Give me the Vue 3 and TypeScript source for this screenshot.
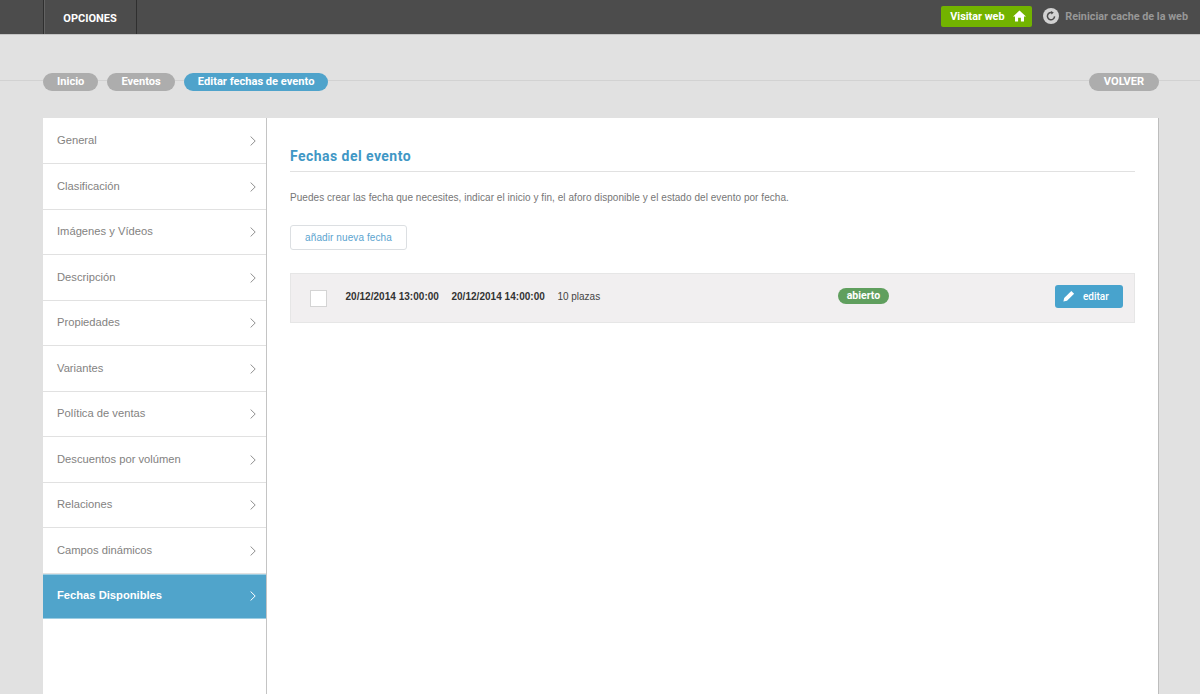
<template>
  <div class="page">
    <header class="topbar">
      <nav class="top-nav">
        <span class="top-tab">OPCIONES</span>
      </nav>
      <div class="top-actions">
        <a class="visit-btn">
          Visitar web
          <svg class="home-icon" width="13" height="12" viewBox="0 0 13 12">
            <path d="M6.5 0.5 L13 6.6 H11 V11.5 H7.9 V7.8 H5.1 V11.5 H2 V6.6 H0 Z" fill="#fff" />
          </svg>
        </a>
        <a class="cache-link">
          <svg class="cache-icon" width="16" height="16" viewBox="0 0 16 16">
            <circle cx="8" cy="8" r="8" fill="#d2d2d2" />
            <path d="M9.6 4.9 A3.6 3.6 0 1 0 11.6 8.4" fill="none" stroke="#4c4c4c" stroke-width="1.5" />
            <path d="M7.9 3 L10.8 4.6 L8.4 6.6 Z" fill="#4c4c4c" />
          </svg>
          Reiniciar cache de la web
        </a>
      </div>
    </header>

    <div class="crumb-row">
      <div class="crumbs">
        <span v-for="c in crumbs" :key="c.label" class="pill" :class="{ current: c.current }">{{ c.label }}</span>
      </div>
      <span class="pill back">VOLVER</span>
    </div>

    <main class="panel">
      <aside class="side">
        <a v-for="item in menu" :key="item" class="side-item" :class="{ active: item === activeItem }">
          <span>{{ item }}</span>
          <svg class="chevron" width="6" height="10" viewBox="0 0 6 10">
            <path d="M0.6 0.5 L5.2 5 L0.6 9.5" fill="none" stroke="currentColor" stroke-width="1" />
          </svg>
        </a>
      </aside>

      <section class="content">
        <h2 class="title">Fechas del evento</h2>
        <p class="intro">Puedes crear las fecha que necesites, indicar el inicio y fin, el aforo disponible y el estado del evento por fecha.</p>
        <button class="add-btn">añadir nueva fecha</button>

        <div v-for="d in dates" :key="d.start" class="date-row">
          <span class="check"></span>
          <strong class="stamp">{{ d.start }}</strong>
          <strong class="stamp">{{ d.end }}</strong>
          <span class="seats">{{ d.seats }}</span>
          <span class="status">{{ d.status }}</span>
          <button class="edit-btn">
            <svg width="12" height="12" viewBox="0 0 12 12">
              <path d="M8.3 0.9 L11.1 3.7 L4 10.8 L0.4 11.6 L1.2 8 Z" fill="#fff" />
            </svg>
            editar
          </button>
        </div>
      </section>
    </main>
  </div>
</template>

<script setup lang="ts">
const crumbs = [
  { label: 'Inicio', current: false },
  { label: 'Eventos', current: false },
  { label: 'Editar fechas de evento', current: true },
];

const menu: string[] = [
  'General',
  'Clasificación',
  'Imágenes y Vídeos',
  'Descripción',
  'Propiedades',
  'Variantes',
  'Política de ventas',
  'Descuentos por volúmen',
  'Relaciones',
  'Campos dinámicos',
  'Fechas Disponibles',
];
const activeItem = 'Fechas Disponibles';

const dates = [
  { start: '20/12/2014 13:00:00', end: '20/12/2014 14:00:00', seats: '10 plazas', status: 'abierto' },
];
</script>

<style>
html,
body {
  margin: 0;
  background: #e1e1e1;
  overflow: hidden;
}
</style>

<style scoped>
.page {
  height: 694px;
  overflow: hidden;
  background: #e1e1e1;
  font-family: "Liberation Sans", Arial, sans-serif;
}

.topbar {
  height: 34px;
  padding: 0 12px 0 43px;
  display: flex;
  justify-content: space-between;
  background: #4c4c4c;
  border-bottom: 1px solid #c4c4c4;
}

.top-nav {
  display: flex;
}

.top-tab {
  width: 92px;
  text-align: center;
  line-height: 37px;
  font-size: 11px;
  font-family: Roboto, sans-serif;
  font-weight: 700;
  color: #fff;
  border-left: 1px solid #2f2f2f;
  border-right: 1px solid #2f2f2f;
  box-shadow: inset 1px 0 0 #636363;
}

.top-actions {
  display: flex;
  align-items: center;
  gap: 11px;
  padding-bottom: 2px;
}

.visit-btn {
  width: 91px;
  height: 21px;
  box-sizing: border-box;
  padding: 0 6px 0 9px;
  display: flex;
  align-items: center;
  justify-content: space-between;
  background: #72b300;
  border-radius: 2px;
  font-family: Roboto, sans-serif;
  font-size: 10.8px;
  font-weight: 700;
  color: #fff;
}

.cache-link {
  display: flex;
  align-items: center;
  gap: 6px;
  font-family: Roboto, sans-serif;
  font-size: 10.8px;
  font-weight: 700;
  color: #979797;
}

.crumb-row {
  height: 18px;
  margin: 38px 41px 0 43px;
  display: flex;
  justify-content: space-between;
  position: relative;
}

.crumb-row::before {
  content: "";
  position: absolute;
  top: 7px;
  left: -43px;
  right: -41px;
  height: 1px;
  background: #d2d2d2;
}

.crumbs {
  display: flex;
  gap: 9px;
  position: relative;
}

.pill {
  position: relative;
  height: 18px;
  padding: 0 14px;
  border-radius: 9px;
  background: #adadad;
  font-family: Roboto, sans-serif;
  font-size: 11.1px;
  font-weight: 700;
  line-height: 17px;
  color: #fff;
}

.pill.current {
  background: #4fa3cb;
}

.pill.back {
  width: 70px;
  box-sizing: border-box;
  text-align: center;
  padding: 0;
}

.panel {
  margin: 27px 42px 0 43px;
  height: 600px;
  display: flex;
  background: #fff;
  box-shadow: 1px 0 0 #bdbdbd;
}

.side {
  width: 223px;
  flex: none;
  padding-top: 0.5px;
  border-right: 1px solid #c4c4c4;
}

.side-item {
  height: 45.5px;
  box-sizing: border-box;
  padding: 0 10px 1px 14px;
  display: flex;
  align-items: center;
  justify-content: space-between;
  border-bottom: 1px solid #e1e1e1;
  font-size: 11.2px;
  color: #83827f;
}

.side-item .chevron {
  color: #909090;
  margin-top: 2px;
}

.side-item.active {
  background: #50a4cb;
  border-bottom: 1px solid #9ccde3;
  box-shadow: inset 0 1px 0 #9ccde3;
  font-weight: 700;
  color: #fff;
}

.side-item.active .chevron {
  color: #fff;
}

.content {
  flex: 1;
  padding: 30px 23px 0 23px;
}

.title {
  margin: 0;
  height: 23px;
  font-family: Roboto, sans-serif;
  font-size: 14px;
  font-weight: 700;
  line-height: 17px;
  letter-spacing: 0.45px;
  color: #3f97c5;
  border-bottom: 1px solid #e1e1e1;
}

.intro {
  margin: 19px 0 0;
  font-size: 10px;
  line-height: 14px;
  letter-spacing: 0.05px;
  color: #767676;
}

.add-btn {
  display: block;
  margin-top: 20px;
  width: 117px;
  height: 25px;
  padding: 0;
  background: #fff;
  border: 1px solid #dcdfe2;
  border-radius: 3px;
  font-family: "Liberation Sans", Arial, sans-serif;
  font-size: 10px;
  letter-spacing: 0.1px;
  color: #5ba4cf;
}

.date-row {
  margin-top: 23px;
  height: 50px;
  box-sizing: border-box;
  padding: 0 11px 0 19px;
  display: flex;
  align-items: center;
  background: #f1eff0;
  border: 1px solid #e6e6e6;
}

.check {
  width: 15px;
  height: 15px;
  margin-right: 18.5px;
  background: #fff;
  border: 1px solid #d4d4d4;
}

.stamp {
  margin-right: 12.5px;
  margin-bottom: 4px;
  font-size: 10px;
  letter-spacing: 0.03px;
  color: #333;
}

.seats {
  margin-bottom: 4px;
  font-size: 10px;
  color: #444;
}

.status {
  margin-left: 237.5px;
  margin-bottom: 4px;
  padding: 0 9px;
  height: 16px;
  border-radius: 8px;
  background: #609f5e;
  font-family: Roboto, sans-serif;
  font-size: 10.5px;
  font-weight: 700;
  line-height: 15px;
  color: #fff;
}

.edit-btn {
  margin-left: auto;
  margin-bottom: 4px;
  width: 68px;
  height: 23px;
  padding: 0 0 0 8px;
  display: flex;
  align-items: center;
  gap: 8px;
  background: #48a3cd;
  border: none;
  border-radius: 3px;
  font-family: Roboto, sans-serif;
  font-size: 10px;
  font-weight: 500;
  color: #fff;
}
</style>
